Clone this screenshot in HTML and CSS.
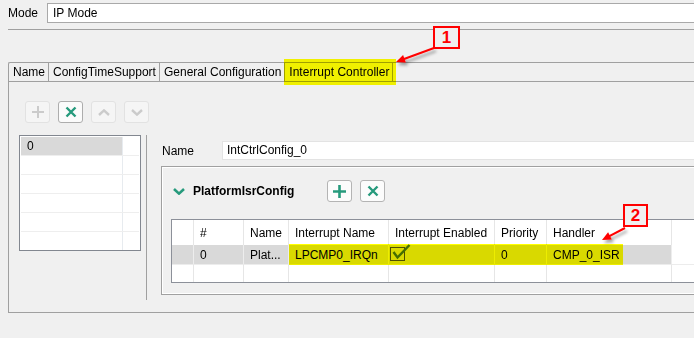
FILE: index.html
```html
<!DOCTYPE html>
<html lang="en">
<head>
    <meta charset="UTF-8">
    <title>Interrupt Controller</title>
    <link rel="stylesheet" href="styles.css">
</head>
<body>

    <div class="mode-row">
        <span class="mode-label">Mode</span>
        <div class="text-field">IP Mode</div>
    </div>
    <div class="separator"></div>

    <div class="tab-panel">
        <div class="tab-strip">
            <div class="tab">Name</div>
            <div class="tab">ConfigTimeSupport</div>
            <div class="tab">General Configuration</div>
            <div class="tab">Interrupt Controller<span class="marker tab-marker"></span></div>
        </div>

        <div class="toolbar">
            <div class="tool-btn">
                <svg width="14" height="14" viewBox="0 0 14 14"><path d="M7 1v12M1 7h12" stroke="currentColor" stroke-width="2" fill="none"/></svg>
            </div>
            <div class="tool-btn enabled">
                <svg width="12" height="12" viewBox="0 0 12 12"><path d="M1.5 1.5l9 9M10.5 1.5l-9 9" stroke="currentColor" stroke-width="2.4" fill="none"/></svg>
            </div>
            <div class="tool-btn">
                <svg width="12" height="7" viewBox="0 0 12 7"><path d="M1 6l5-4.6 5 4.6" stroke="currentColor" stroke-width="2.4" fill="none"/></svg>
            </div>
            <div class="tool-btn">
                <svg width="12" height="7" viewBox="0 0 12 7"><path d="M1 1l5 4.6 5-4.6" stroke="currentColor" stroke-width="2.4" fill="none"/></svg>
            </div>
        </div>

        <div class="split">
            <div class="index-list">
                <div class="list-row"><span class="list-cell selected">0</span><span class="list-fill"></span></div>
                <div class="list-row"><span class="list-cell"></span><span class="list-fill"></span></div>
                <div class="list-row"><span class="list-cell"></span><span class="list-fill"></span></div>
                <div class="list-row"><span class="list-cell"></span><span class="list-fill"></span></div>
                <div class="list-row"><span class="list-cell"></span><span class="list-fill"></span></div>
                <div class="list-row"><span class="list-cell"></span><span class="list-fill"></span></div>
            </div>

            <div class="splitter"></div>

            <div class="detail">
                <div class="name-row">
                    <span class="name-label">Name</span>
                    <div class="text-field light">IntCtrlConfig_0</div>
                </div>

                <div class="group">
                    <div class="group-head">
                        <svg class="chevron" width="12" height="7" viewBox="0 0 12 7"><path d="M1 1l5 4.6 5-4.6" stroke="currentColor" stroke-width="2.6" fill="none"/></svg>
                        <span class="group-title">PlatformIsrConfig</span>
                        <div class="group-btn">
                            <svg width="15" height="15" viewBox="0 0 15 15"><path d="M7.5 1v13M1 7.5h13" stroke="currentColor" stroke-width="2.6" fill="none"/></svg>
                        </div>
                        <div class="group-btn">
                            <svg width="12" height="12" viewBox="0 0 12 12"><path d="M1.5 1.5l9 9M10.5 1.5l-9 9" stroke="currentColor" stroke-width="2.4" fill="none"/></svg>
                        </div>
                    </div>

                    <table class="grid">
                        <tr class="head">
                            <th class="c-sel"></th>
                            <th class="c-num">#</th>
                            <th class="c-name">Name</th>
                            <th class="c-irq">Interrupt Name</th>
                            <th class="c-en">Interrupt Enabled</th>
                            <th class="c-prio">Priority</th>
                            <th class="c-handler">Handler</th>
                            <th></th>
                        </tr>
                        <tr class="row selected-row">
                            <td></td>
                            <td>0</td>
                            <td>Plat...</td>
                            <td class="marked">LPCMP0_IRQn<span class="marker row-marker"></span></td>
                            <td class="check-cell">
                                <svg class="check" width="22" height="17" viewBox="0 0 22 17">
                                    <rect x="0.5" y="3.5" width="14" height="13" fill="none" stroke="#505050"/>
                                    <path d="M3.5 8l4 5.5L19.5 1" stroke="#466e1e" stroke-width="2.4" fill="none"/>
                                </svg>
                            </td>
                            <td>0</td>
                            <td>CMP_0_ISR</td>
                            <td class="blank"></td>
                        </tr>
                        <tr class="row empty-row">
                            <td></td><td></td><td></td><td></td><td></td><td></td><td></td><td></td>
                        </tr>
                    </table>
                </div>
            </div>
        </div>
    </div>

    <!-- annotations -->
    <div class="callout callout-1">1</div>
    <div class="callout callout-2">2</div>
    <svg class="arrows" width="694" height="338" viewBox="0 0 694 338">
        <defs>
            <filter id="shadow" x="-30%" y="-60%" width="160%" height="220%">
                <feDropShadow dx="2" dy="3" stdDeviation="1.5" flood-color="#000" flood-opacity="0.35"/>
            </filter>
        </defs>
        <g fill="#f00" stroke="#f00" filter="url(#shadow)">
            <line x1="434" y1="48" x2="402" y2="59.8" stroke-width="2"/>
            <polygon points="396,62 405.8,62.6 403.1,55.1" stroke="none"/>
        </g>
        <g fill="#f00" stroke="#f00" filter="url(#shadow)">
            <line x1="625" y1="228" x2="607" y2="237.4" stroke-width="2"/>
            <polygon points="602,240 611.8,239.4 608.1,232.3" stroke="none"/>
        </g>
    </svg>

</body>
</html>
```

FILE: styles.css
```css
* {
    box-sizing: border-box;
}
body {
    margin: 0;
    width: 694px;
    height: 338px;
    overflow: hidden;
    position: relative;
    background: #f0f0f0;
    font-family: "Liberation Sans", Arial, sans-serif;
    font-size: 12px;
    color: #000;
}

/* top mode field */
.mode-row {
    display: flex;
    align-items: center;
    padding: 3px 0 0 8px;
}
.mode-label {
    width: 39px;
}
.text-field {
    flex: 1;
    height: 20px;
    line-height: 18px;
    padding-left: 5px;
    background: #fff;
    border: 1px solid #a9a9a9;
    border-right: none;
    white-space: nowrap;
}
.text-field.light {
    height: 19px;
    line-height: 17px;
    padding-left: 4px;
    border-color: #e3e3e3;
}
.separator {
    margin: 6px 0 0 8px;
    border-top: 1px solid #a0a0a0;
}

/* tabs */
.tab-panel {
    margin: 32px 0 0 8px;
    height: 251px;
    border: 1px solid #a0a0a0;
    border-right: none;
    border-top-left-radius: 2px;
}
.tab-strip {
    display: flex;
    height: 19px;
    border-bottom: 1px solid #a0a0a0;
}
.tab {
    position: relative;
    padding: 0 3px 0 4px;
    line-height: 18px;
    border-right: 1px solid #a0a0a0;
    white-space: nowrap;
}

/* highlighter marks */
.marker {
    position: absolute;
    background: #ffff00;
    mix-blend-mode: multiply;
}
.tab-marker {
    top: -4px;
    bottom: -4px;
    left: -1px;
    right: -4px;
}
.row-marker {
    top: -1px;
    bottom: -1px;
    left: 0;
    width: 334px;
}

/* list toolbar */
.toolbar {
    display: flex;
    gap: 8px;
    padding: 19px 0 0 16px;
}
.tool-btn {
    width: 25px;
    height: 22px;
    display: flex;
    align-items: center;
    justify-content: center;
    border: 1px solid #e2e2e2;
    border-radius: 3px;
    background: #f5f5f5;
    color: #cbcbcb;
}
.tool-btn.enabled {
    border-color: #adadad;
    background: #fbfbfb;
    color: #269a7c;
}

.split {
    display: flex;
    align-items: flex-start;
    margin-top: 12px;
    padding-left: 10px;
}

/* index list */
.index-list {
    width: 122px;
    height: 116px;
    padding: 1px;
    overflow: hidden;
    background: #fff;
    border: 1px solid #828790;
}
.list-row {
    display: flex;
    height: 19px;
    border-bottom: 1px solid #eeeeee;
}
.list-cell {
    width: 101px;
    padding-left: 6px;
    line-height: 18px;
}
.list-cell.selected {
    background: #d9d9d9;
}
.list-fill {
    flex: 1;
    border-left: 1px solid #e7ebef;
}

.splitter {
    width: 1px;
    height: 165px;
    margin-left: 5px;
    background: #a0a0a0;
}

/* detail pane */
.detail {
    flex: 1;
    min-width: 0;
    margin-left: 14px;
}
.name-row {
    display: flex;
    align-items: center;
    padding: 6px 0 0 1px;
}
.name-label {
    width: 60px;
}
.group {
    margin-top: 6px;
    padding: 13px 0 11px 0;
    border: 1px solid #a0a0a0;
    border-right: none;
    box-shadow: inset 1px 1px 0 #fff, inset 0 -1px 0 #fff;
}
.group-head {
    display: flex;
    align-items: center;
    gap: 8px;
    padding-left: 11px;
}
.chevron {
    color: #269a7c;
}
.group-title {
    width: 126px;
    font-weight: bold;
}
.group-btn {
    width: 25px;
    height: 22px;
    display: flex;
    align-items: center;
    justify-content: center;
    border: 1px solid #b4b4b4;
    border-radius: 3px;
    background: #fcfcfc;
    color: #269a7c;
}

/* table */
.grid {
    margin: 17px 0 0 9px;
    width: calc(100% - 9px);
    table-layout: fixed;
    border-collapse: separate;
    border-spacing: 0;
    border: 1px solid #8c9099;
    border-right: none;
    background: #fff;
}
.grid th,
.grid td {
    padding: 0 0 0 6px;
    text-align: left;
    font-weight: normal;
    white-space: nowrap;
    overflow: hidden;
    border-right: 1px solid #e6e6e6;
}
.grid th:last-child,
.grid td:last-child {
    border-right: none;
}
.head th {
    height: 25px;
}
.c-sel { width: 22px; }
.c-num { width: 50px; }
.c-name { width: 45px; }
.c-irq { width: 100px; }
.c-en { width: 106px; }
.c-prio { width: 52px; }
.c-handler { width: 125px; }

.selected-row td {
    height: 19px;
    background: #d9d9d9;
    border-right-color: #ededed;
}
.selected-row td.blank {
    background: #fff;
}
.grid td.marked {
    position: relative;
    overflow: visible;
}
.grid td.check-cell {
    padding-left: 1px;
    overflow: visible;
}
.check {
    display: block;
    margin-top: -4px;
    overflow: visible;
}
.empty-row td {
    height: 18px;
    border-top: 1px solid #ececec;
}

/* callouts */
.callout {
    position: absolute;
    border: 2px solid #f00;
    background: #f0f0f0;
    color: #f00;
    font-weight: bold;
    font-size: 17px;
    line-height: 19px;
    text-align: center;
}
.callout-1 {
    left: 433px;
    top: 26px;
    width: 27px;
    height: 23px;
}
.callout-2 {
    left: 623px;
    top: 204px;
    width: 25px;
    height: 23px;
}
.arrows {
    position: absolute;
    left: 0;
    top: 0;
    pointer-events: none;
}
```
